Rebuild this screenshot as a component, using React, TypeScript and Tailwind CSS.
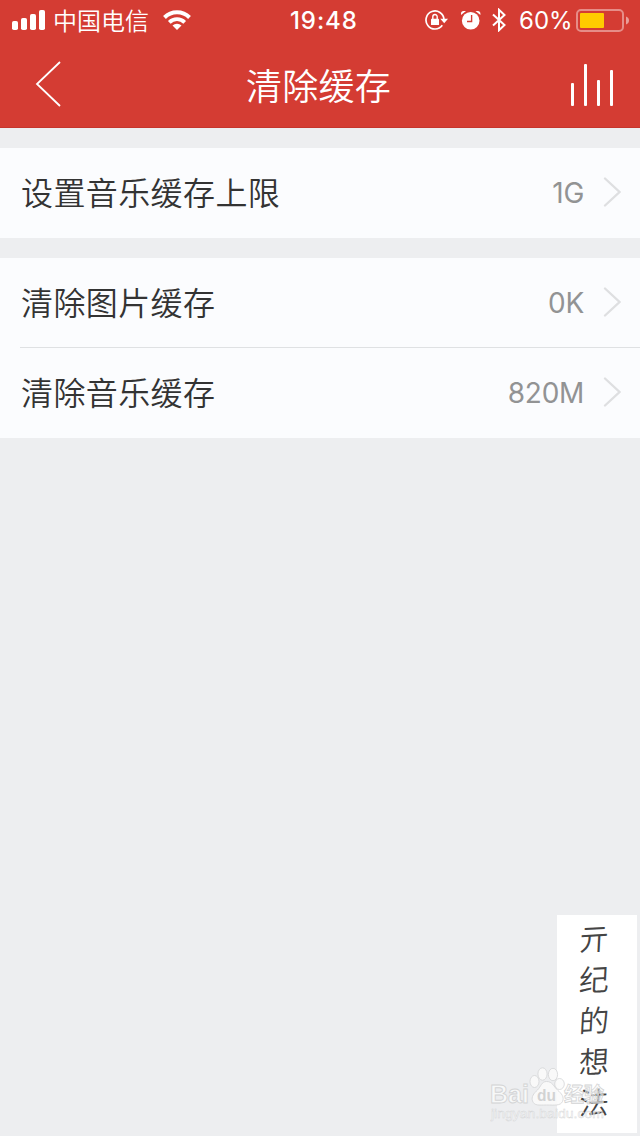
const settings = [
  [{ label: "设置音乐缓存上限", value: "1G" }],
  [
    { label: "清除图片缓存", value: "0K" },
    { label: "清除音乐缓存", value: "820M" },
  ],
];

function StatusBar() {
  return (
    <div className="relative flex h-10 items-center justify-between pl-3 pr-[11px]">
      <div className="flex items-center">
        <svg width="33" height="20" viewBox="0 0 33 20" fill="#fff">
          <rect x="0" y="11" width="6" height="9" rx="1.8" />
          <rect x="9" y="8" width="6" height="12" rx="1.8" />
          <rect x="18" y="4" width="6" height="16" rx="1.8" />
          <rect x="27" y="0" width="6" height="20" rx="1.8" />
        </svg>
        <span className="ml-2 w-24 whitespace-nowrap pt-[3px] text-[24px] font-[350] leading-10">中国电信</span>
        <svg className="ml-[14px]" width="28" height="20" viewBox="0 0 28 20" fill="none" stroke="#fff" strokeWidth="4">
          <path d="M1.5 7.5a17.7 17.7 0 0 1 25 0" />
          <path d="M6.3 12.3a10.9 10.9 0 0 1 15.4 0" strokeWidth="3.8" />
          <path d="M9.5 15.5a6.4 6.4 0 0 1 9 0L14 20z" fill="#fff" stroke="none" />
        </svg>
      </div>

      <span className="absolute left-[290px] top-px whitespace-nowrap text-[24px] font-medium leading-10 tracking-[0.9px]">
        19:48
      </span>

      <div className="flex items-center">
        {/* Rotation lock */}
        <svg width="23" height="20" viewBox="0 0 23 20" fill="none">
          <path d="M17.3 15.3A9 9 0 1 1 19 9.5" stroke="#fff" strokeWidth="1.7" />
          <path d="M15.3 8.8h7.7L19.2 13.2z" fill="#fff" />
          <rect x="6" y="8.7" width="8" height="6.3" rx="0.6" fill="#fff" />
          <path d="M7.8 9V6.7a2.2 2.2 0 0 1 4.4 0V9" stroke="#fff" strokeWidth="1.4" />
        </svg>
        {/* Alarm */}
        <svg className="ml-[13px]" width="20" height="20" viewBox="0 0 20 20" fill="none">
          <circle cx="9.7" cy="10.7" r="8.8" fill="#fff" />
          <path d="M0 5V3.5C0 2 1 1 2.5 1H5zM19.4 5V3.5c0-1.500-1-2.500-2.500-2.500h-2.500z" fill="#fff" />
          <path d="M10.6 5v6.5H6" stroke="#d43c33" strokeWidth="1.4" />
        </svg>
        {/* Bluetooth */}
        <svg className="ml-[11px]" width="14" height="24" viewBox="0 0 14 24" fill="none" stroke="#fff" strokeWidth="2">
          <path d="M1 6.5 12.5 17 7 22.2V1.8L12.5 7 1 17.5" />
        </svg>
        <span className="ml-[13px] w-[50px] whitespace-nowrap pt-[2px] text-[24px] font-[380] leading-10">60%</span>
        <svg className="ml-[7px]" width="53" height="24" viewBox="0 0 53 24">
          <rect x="1" y="2" width="46" height="21" rx="4" fill="none" stroke="#fff" strokeOpacity="0.42" strokeWidth="2" />
          <rect x="4" y="5" width="24" height="15" rx="1" fill="#ffcc00" />
          <path d="M50 8.5c2 .7 3 2.2 3 4s-1 3.3-3 4z" fill="#fff" fillOpacity="0.5" />
        </svg>
      </div>
    </div>
  );
}

function NavBar() {
  return (
    <div className="flex h-[87px] items-center justify-between pl-[35px] pr-[26px]">
      <svg width="43" height="46" viewBox="0 0 43 46" fill="none" stroke="#fff" strokeWidth="1.8">
        <path d="M25 1 2 23l23 22" />
      </svg>
      <h1 className="mr-3 pt-1.5 text-[36px] font-[350] leading-[52px] tracking-[0.3px]">清除缓存</h1>
      <svg width="43" height="44" viewBox="0 0 43 44" fill="#fff">
        <rect x="0" y="21" width="3" height="23" rx="1" />
        <rect x="13" y="2" width="3" height="42" rx="1" />
        <rect x="26" y="18" width="3" height="26" rx="1" />
        <rect x="39" y="8" width="3" height="36" rx="1" />
      </svg>
    </div>
  );
}

function SettingRow({ label, value, last }: { label: string; value: string; last: boolean }) {
  return (
    <div className="h-[90px] bg-[#fbfcfe] pl-5">
      <div className={`flex h-full items-center pr-[19px] ${last ? "" : "border-b border-[#dfe1e3]"}`}>
        <span className="flex-1 pl-px pt-0.5 text-[32px] font-[350] tracking-[0.4px] text-[#333]">{label}</span>
        <span className="text-[28px] font-[380] tracking-[-0.3px] text-[#929394]">{value}</span>
        <svg className="mb-0.5 ml-[19px]" width="18" height="30" viewBox="0 0 18 30" fill="none" stroke="#dedfe1" strokeWidth="2.3" strokeLinecap="round">
          <path d="m2 1.500 14.500 13.500L2 28.500" />
        </svg>
      </div>
    </div>
  );
}

function Signature() {
  return (
    <div className="absolute left-[557px] top-[915px] flex h-[218px] w-20 flex-col items-center bg-white pt-1 text-[30px] font-[350] leading-[41px] text-[#444]">
      {["亓", "纪", "的", "想", "法"].map((char) => (
        <span key={char} className="-ml-1.5 -skew-x-6 -rotate-3">{char}</span>
      ))}
    </div>
  );
}

function Watermark() {
  return (
    <div className="absolute left-[490px] top-[1066px] h-14 w-32">
      <svg width="128" height="56" viewBox="0 0 128 56" fill="#fafafa" fillOpacity="0.85" stroke="#d3d4d5" strokeWidth="0.8">
        <ellipse cx="44.5" cy="15.5" rx="4.5" ry="6" />
        <ellipse cx="52.5" cy="8" rx="4.6" ry="6.2" />
        <ellipse cx="63" cy="8.5" rx="4.6" ry="6.2" />
        <ellipse cx="69.5" cy="18" rx="4.8" ry="5.5" />
        <path d="M56.5 15.5c6 0 7 5 11 8.5s7 7 5 11.5c-2 4.5-8 3.5-16 3.5s-12 1-14-4c-1.500-4 1.500-8 5-11 3.500-3.500 4-8.500 9-8.500z" />
        <text x="0" y="37" fontFamily="Liberation Sans, sans-serif" fontSize="26" fontWeight="bold" strokeWidth="0.9" textLength="39" lengthAdjust="spacingAndGlyphs">Bai</text>
        <text x="47" y="35" fontFamily="Liberation Sans, sans-serif" fontSize="17" fontWeight="bold" fill="#cbcccd" stroke="none" textLength="19" lengthAdjust="spacingAndGlyphs">du</text>
        <text x="74" y="36" fontFamily="Noto Sans CJK SC, sans-serif" fontWeight="bold" fontSize="20" fillOpacity="0.5">经验</text>
        <text x="1" y="52" fontFamily="Liberation Sans, sans-serif" fontSize="13.5" strokeWidth="0.4" textLength="113" lengthAdjust="spacingAndGlyphs" fillOpacity="0.6">
          jingyan.baidu.com
        </text>
      </svg>
    </div>
  );
}

export default function App() {
  return (
    <main className="relative h-[1136px] w-[640px] overflow-hidden bg-[#edeef0] font-['Inter','Noto_Sans_CJK_SC',sans-serif]">
      <header className="h-32 border-b border-[#c6352d] bg-[#d43c33] text-white">
        <StatusBar />
        <NavBar />
      </header>
      <div className="flex flex-col gap-5 pt-5">
        {settings.map((group) => (
          <section key={group[0].label}>
            {group.map((item, i) => (
              <SettingRow key={item.label} {...item} last={i === group.length - 1} />
            ))}
          </section>
        ))}
      </div>
      <Signature />
      <Watermark />
    </main>
  );
}
